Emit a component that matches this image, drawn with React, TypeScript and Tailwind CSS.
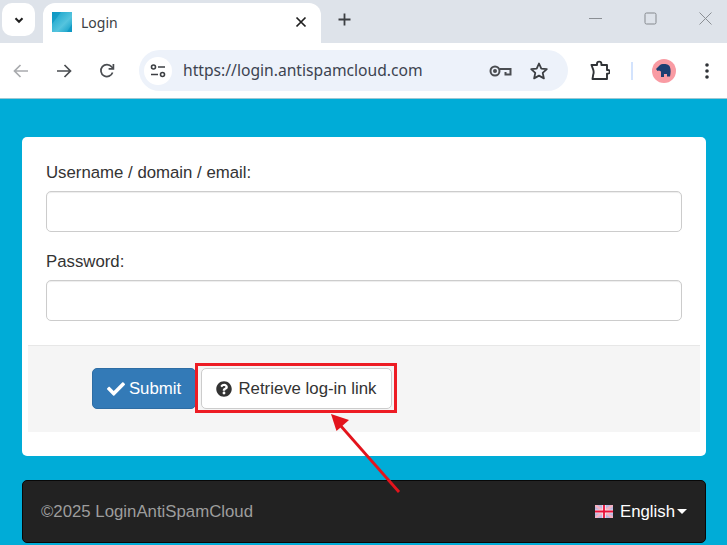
import React from "react";
import { FaCheck, FaQuestionCircle } from "react-icons/fa";

function Chrome() {
  return (
    <>
      <div className="h-[43px] bg-[#dee3ea] flex items-start relative shrink-0">
        <div className="ml-[2px] mt-[3px] w-[33px] h-[33px] bg-white rounded-[10px] flex items-center justify-center">
          <svg width="12" height="12" viewBox="0 0 12 12" fill="none" stroke="#1f1f1f" strokeWidth="2"><path d="M2.5 4.2 6 7.8l3.5-3.6" /></svg>
        </div>
        <div className="ml-[8px] mt-[3px] w-[278px] h-[40px] bg-white rounded-t-[12px] flex items-center pl-[9px] pr-[14px]">
          <svg width="20" height="20" viewBox="0 0 20 20" className="mr-[9px] -mt-[2px]">
            <defs><linearGradient id="g" x1="0" y1="0" x2="1" y2="1"><stop offset="0" stopColor="#0f9fc9" /><stop offset="0.6" stopColor="#55c4de" /><stop offset="1" stopColor="#0b9bc6" /></linearGradient></defs>
            <rect width="20" height="20" fill="url(#g)" />
            <path d="M0 0h9L0 12zM20 0v12l-5 8h5z" fill="#0a93c0" opacity="0.6" />
          </svg>
          <span className="text-[14px] text-[#3c4043] font-['Noto_Sans',sans-serif] -mt-[2px]">Login</span>
          <svg className="ml-auto -mt-[3px]" width="12" height="12" viewBox="0 0 12 12" stroke="#1f1f1f" strokeWidth="1.7"><path d="m1.5 1.5 9 9m0-9-9 9" /></svg>
        </div>
        <svg className="ml-[17px] mt-[13px]" width="13" height="13" viewBox="0 0 13 13" stroke="#3c3f43" strokeWidth="1.8"><path d="M6.5 0.5v12M0.5 6.5h12" /></svg>
        <div className="ml-auto flex items-center mt-[12px]">
          <svg width="13" height="13" viewBox="0 0 13 13" stroke="#8b8f94" strokeWidth="1"><path d="M0 6.5h13" /></svg>
          <svg className="ml-[42px]" width="13" height="13" viewBox="0 0 13 13" fill="none" stroke="#85898e" strokeWidth="1"><rect x="1" y="1" width="11" height="11" rx="1.5" /></svg>
          <svg className="ml-[42px] mr-[15px]" width="13" height="13" viewBox="0 0 13 13" stroke="#8b8f94" strokeWidth="1"><path d="m0.5 0.5 12 12m0-12-12 12" /></svg>
        </div>
      </div>
      <div className="h-[56px] bg-white flex items-center shrink-0 border-b border-[#9cc7d2]">
        <svg className="ml-[13px]" width="16" height="14" viewBox="0 0 16 14" fill="none" stroke="#a9abae" strokeWidth="1.7"><path d="M15 7H2m5.5-6L1.5 7l6 6" /></svg>
        <svg className="ml-[27px]" width="16" height="14" viewBox="0 0 16 14" fill="none" stroke="#4a4d51" strokeWidth="1.7"><path d="M1 7h13M8.5 1l6 6-6 6" /></svg>
        <svg className="ml-[27px]" width="16" height="16" viewBox="0 0 16 16" fill="none" stroke="#4a4d51" strokeWidth="1.7"><path d="M13.6 9.5A6 6 0 1 1 12.6 3.8L14 5.2" /><path d="M14.4 1v4.8H9.6" /></svg>
        <div className="ml-[24px] w-[429px] h-[41px] bg-[#edf2fa] rounded-full flex items-center pl-[5px]">
          <div className="w-[28px] h-[28px] rounded-full bg-white flex items-center justify-center">
            <svg width="16" height="14" viewBox="0 0 16 14" fill="none" stroke="#3c3f43" strokeWidth="1.6"><circle cx="3.5" cy="3" r="2" /><path d="M8 3h7M1 10.500h7" /><circle cx="12.500" cy="10.500" r="2" /></svg>
          </div>
          <span className="ml-[11px] text-[15.650px] text-[#3c4350] font-['Noto_Sans',sans-serif]">https://login.antispamcloud.com</span>
          <svg className="ml-auto" width="23" height="14" viewBox="0 0 23 14" fill="none" stroke="#4a4d51" strokeWidth="2"><circle cx="6" cy="7" r="4.500" /><circle cx="6" cy="7" r="1" /><path d="M10.500 5H21.500v5.500h-5V8" /></svg>
          <svg className="ml-[17px] mr-[19px]" width="20" height="20" viewBox="0 0 20 20" fill="none" stroke="#3c3f43" strokeWidth="1.8" strokeLinejoin="round"><path d="m10 2.500 2.300 5.100 5.500.6-4.100 3.700 1.200 5.500-4.900-2.800-4.900 2.800 1.200-5.500L2.200 8.200l5.500-.6z" /></svg>
        </div>
        <svg className="ml-[21px]" width="21" height="21" viewBox="0 0 21 21" fill="none" stroke="#2f3236" strokeWidth="1.900" strokeLinejoin="round"><path d="M2.500 5H8V3.800a2.200 2.200 0 0 1 4.400 0V5H18v5h1a1.800 1.800 0 0 1 0 3.600h-1V19H3.500l.7-4.300c.6-1.700.6-3.400 0-5z" /></svg>
        <div className="ml-[21px] w-[2px] h-[18px] bg-[#d3e3fd]" />
        <div className="ml-[19px] w-[24px] h-[24px] rounded-full bg-[#f99ba3] flex items-center justify-center">
          <svg width="16" height="14" viewBox="0 0 16 14" fill="#1d3f72"><path d="M0 5 4 1c2-1.500 7-1.500 9 .5 2 2 2 7 1 11h-3V10H8v3H5V7.500L3 6.500 1.500 7z" /></svg>
        </div>
        <svg className="ml-[29px]" width="4" height="16" viewBox="0 0 4 16" fill="#2f3236"><circle cx="2" cy="2" r="1.800" /><circle cx="2" cy="8" r="1.800" /><circle cx="2" cy="14" r="1.800" /></svg>
      </div>
    </>
  );
}

function Field({ label }: { label: string }) {
  return (
    <div className="mb-[18px]">
      <label className="block text-[16.800px] leading-[24px] mb-[6px] text-[#333]">{label}</label>
      <div className="h-[41px] bg-white border border-[#ccc] rounded-[5px] shadow-[inset_0_1px_1px_rgba(0,0,0,0.075)]" />
    </div>
  );
}

export default function App() {
  return (
    <div className="relative w-[727px] h-[545px] overflow-hidden flex flex-col bg-[#00acd7] font-['Liberation_Sans',Arial,sans-serif]">
      <Chrome />
      <div className="flex-1 pl-[22px] pt-[38px]">
        <div className="w-[684px] h-[319px] bg-white rounded-[5px] px-[6px] pt-[24px]">
          <div className="px-[18px] h-[184px]">
            <Field label="Username / domain / email:" />
            <Field label="Password:" />
          </div>
          <div className="h-[87px] bg-[#f5f5f5] border-t border-[#e7e7e7] pl-[64px] pt-[22px] flex items-start">
            <button className="h-[41px] w-[104px] bg-[#337ab7] border border-[#2e6da4] rounded-[5px] text-white text-[16.800px] flex items-center justify-center gap-[4px]">
              <FaCheck size={18} />
              Submit
            </button>
            <button className="ml-[5px] h-[41px] w-[191px] bg-white border border-[#ccc] rounded-[5px] text-[#333] text-[16.800px] flex items-center justify-center gap-[6px]">
              <FaQuestionCircle size={16} />
              Retrieve log-in link
            </button>
          </div>
        </div>
        <div className="mt-[24px] w-[684px] h-[63px] bg-[#222222] border border-[#080808] rounded-[5px] flex items-center pl-[18px] pr-[18px]">
          <span className="text-[16.800px] text-[#9d9d9d]">©2025 LoginAntiSpamCloud</span>
          <div className="ml-auto flex items-center text-white text-[16.800px]">
            <svg width="18" height="13" viewBox="0 0 18 13" className="mr-[7px]">
              <rect width="18" height="13" fill="#b9b6e0" />
              <path d="M0 0l18 13M18 0 0 13" stroke="#f7b0c0" strokeWidth="2.500" />
              <path d="M9 0v13M0 6.500h18" stroke="#fbe4ea" strokeWidth="3.500" />
              <path d="M9 0v13M0 6.500h18" stroke="#e8103a" strokeWidth="1.800" />
            </svg>
            English
            <span className="ml-[2px] w-0 h-0 border-x-[5px] border-x-transparent border-t-[5px] border-t-white" />
          </div>
        </div>
      </div>
      <div className="absolute left-[195px] top-[363px] w-[202px] h-[50px] border-[3px] border-[#ed1c24]" />
      <svg className="absolute left-[320px] top-[405px]" width="90" height="95" viewBox="0 0 90 95" fill="none">
        <path d="M79 87 20 20" stroke="#e3141c" strokeWidth="2.800" />
        <path d="m11 9 5.500 17L29 15z" fill="#e3141c" />
      </svg>
    </div>
  );
}
